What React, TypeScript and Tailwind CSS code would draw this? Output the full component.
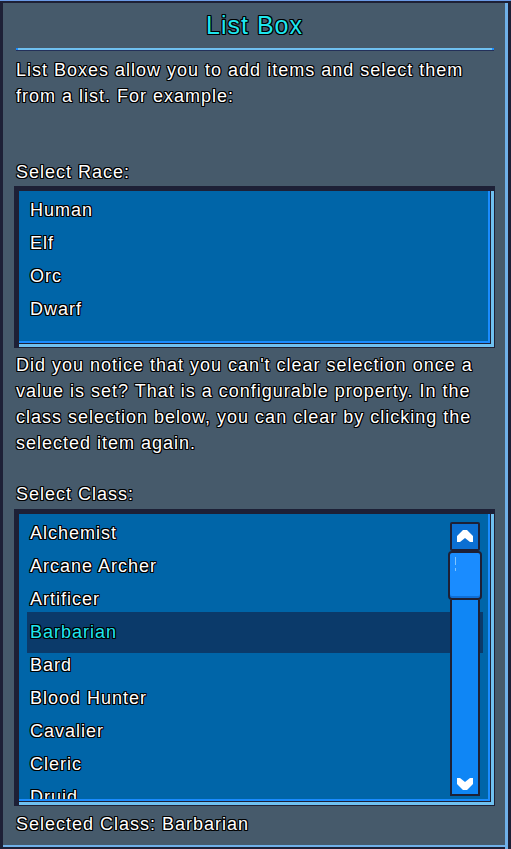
import React, { useState } from 'react';

const races = ['Human', 'Elf', 'Orc', 'Dwarf'];
const classes = [
  'Alchemist',
  'Arcane Archer',
  'Artificer',
  'Barbarian',
  'Bard',
  'Blood Hunter',
  'Cavalier',
  'Cleric',
  'Druid',
  'Fighter',
];

const outline =
  '[text-shadow:-1px_-1px_0_#000,1px_-1px_0_#000,-1px_1px_0_#000,1px_1px_0_#000,0_1px_0_#000,0_-1px_0_#000,1px_0_0_#000,-1px_0_0_#000]';

// pixel frame used by both list boxes
const boxFrame =
  'bg-[#0065a8] shadow-[inset_5px_5px_0_#1d2036,inset_-1px_-1px_0_#1d2036,inset_-4px_-4px_0_#6fc0f0,inset_-5px_-5px_0_#1d2036,inset_-7px_-7px_0_#1a8cff]';

function Chevron({ down }: { down?: boolean }) {
  return (
    <svg width="16" height="13" viewBox="0 0 16 13" className={down ? 'rotate-180' : ''}>
      <polygon points="6,0 10,0 16,6 16,12 13,12 8,8 3,12 0,12 0,6" fill="#ffffff" />
    </svg>
  );
}

function ListItem({
  label,
  selected,
  onClick,
}: {
  label: string;
  selected?: boolean;
  onClick: () => void;
}) {
  return (
    <div
      onClick={onClick}
      className={`h-[33px] flex items-center pl-[3px] cursor-pointer ${
        selected
          ? 'bg-[#0b3a6a] shadow-[0_4px_0_#0b3a6a,0_-4px_0_#0b3a6a] text-[#1fe6ef]'
          : 'text-white'
      }`}
    >
      {label}
    </div>
  );
}

export default function App() {
  const [race, setRace] = useState<string | null>(null);
  const [cls, setCls] = useState<string | null>('Barbarian');

  return (
    <div
      className={`w-[511px] h-[849px] overflow-hidden bg-[#465a6b] text-white text-[18px] tracking-[1px] font-['Liberation_Sans',Arial,sans-serif] ${outline} shadow-[inset_0_1px_0_#6b9ae6,inset_0_3px_0_#1d2036,inset_3px_0_0_#1d2036,inset_-3px_0_0_#1d2036,inset_-6px_0_0_#6fb0e8,inset_0_-2px_0_#1d2036,inset_0_-4px_0_#6fb0e8] pl-[14px] pr-[16px]`}
    >
      {/* Title */}
      <div className="h-[48px] pt-[3px] flex items-center justify-center text-[25px] text-[#1fe6ef]">
        List Box
      </div>
      <div className="ml-[2px] mr-[1px] h-[3px] bg-[#6fc0f0] border-b border-[#23305a] shadow-[inset_2px_0_0_#1a8cff,inset_-2px_0_0_#1a8cff]" />

      <p className="mt-[6px] pl-[2px] leading-[26px]">
        List Boxes allow you to add items and select them
        <br />
        from a list. For example:
      </p>

      <div className="mt-[50px] pl-[2px] leading-[26px]">Select Race:</div>

      {/* Race box */}
      <div className={`mt-[1px] h-[162px] pt-[8px] pl-[13px] pr-[12px] ${boxFrame}`}>
        {races.map((r) => (
          <ListItem key={r} label={r} selected={race === r} onClick={() => setRace(r)} />
        ))}
      </div>

      <p className="mt-[4px] pl-[2px] leading-[26px]">
        Did you notice that you can't clear selection once a
        <br />
        value is set? That is a configurable property. In the
        <br />
        class selection below, you can clear by clicking the
        <br />
        selected item again.
      </p>

      <div className="mt-[25px] pl-[2px] leading-[26px]">Select Class:</div>

      {/* Class box */}
      <div className={`relative mt-[2px] h-[297px] overflow-hidden ${boxFrame}`}>
        <div className="h-[290px] overflow-hidden pt-[8px] pl-[13px] pr-[12px]">
          {classes.map((c) => (
            <ListItem
              key={c}
              label={c}
              selected={cls === c}
              onClick={() => setCls(cls === c ? null : c)}
            />
          ))}
        </div>

        {/* Scrollbar */}
        <div className="absolute right-[13px] top-[13px] bottom-[10px] w-[34px] flex flex-col items-center">
          <div className="w-[30px] h-[29px] bg-[#0b6fd2] border-2 border-[#1d2036] rounded-[2px] flex items-center justify-center">
            <Chevron />
          </div>
          <div className="w-[34px] h-[49px] bg-[#1a8cff] border-2 border-[#1d2036] rounded-[4px] shadow-[inset_0_-2px_0_#0f6fd8] pl-[5px] pt-[4px]">
            <div className="w-[1px] h-[8px] bg-[#7fc4ff]" />
            <div className="w-[1px] h-[3px] mt-[3px] bg-[#7fc4ff]" />
          </div>
          <div className="w-[30px] flex-1 bg-[#0f86f5] border-x-2 border-b-2 border-[#1d2036] flex items-end justify-center pb-[4px]">
            <Chevron down />
          </div>
        </div>
      </div>

      <div className="mt-[5px] pl-[2px] leading-[26px]">
        Selected Class: {cls ?? 'None'}
      </div>
    </div>
  );
}
